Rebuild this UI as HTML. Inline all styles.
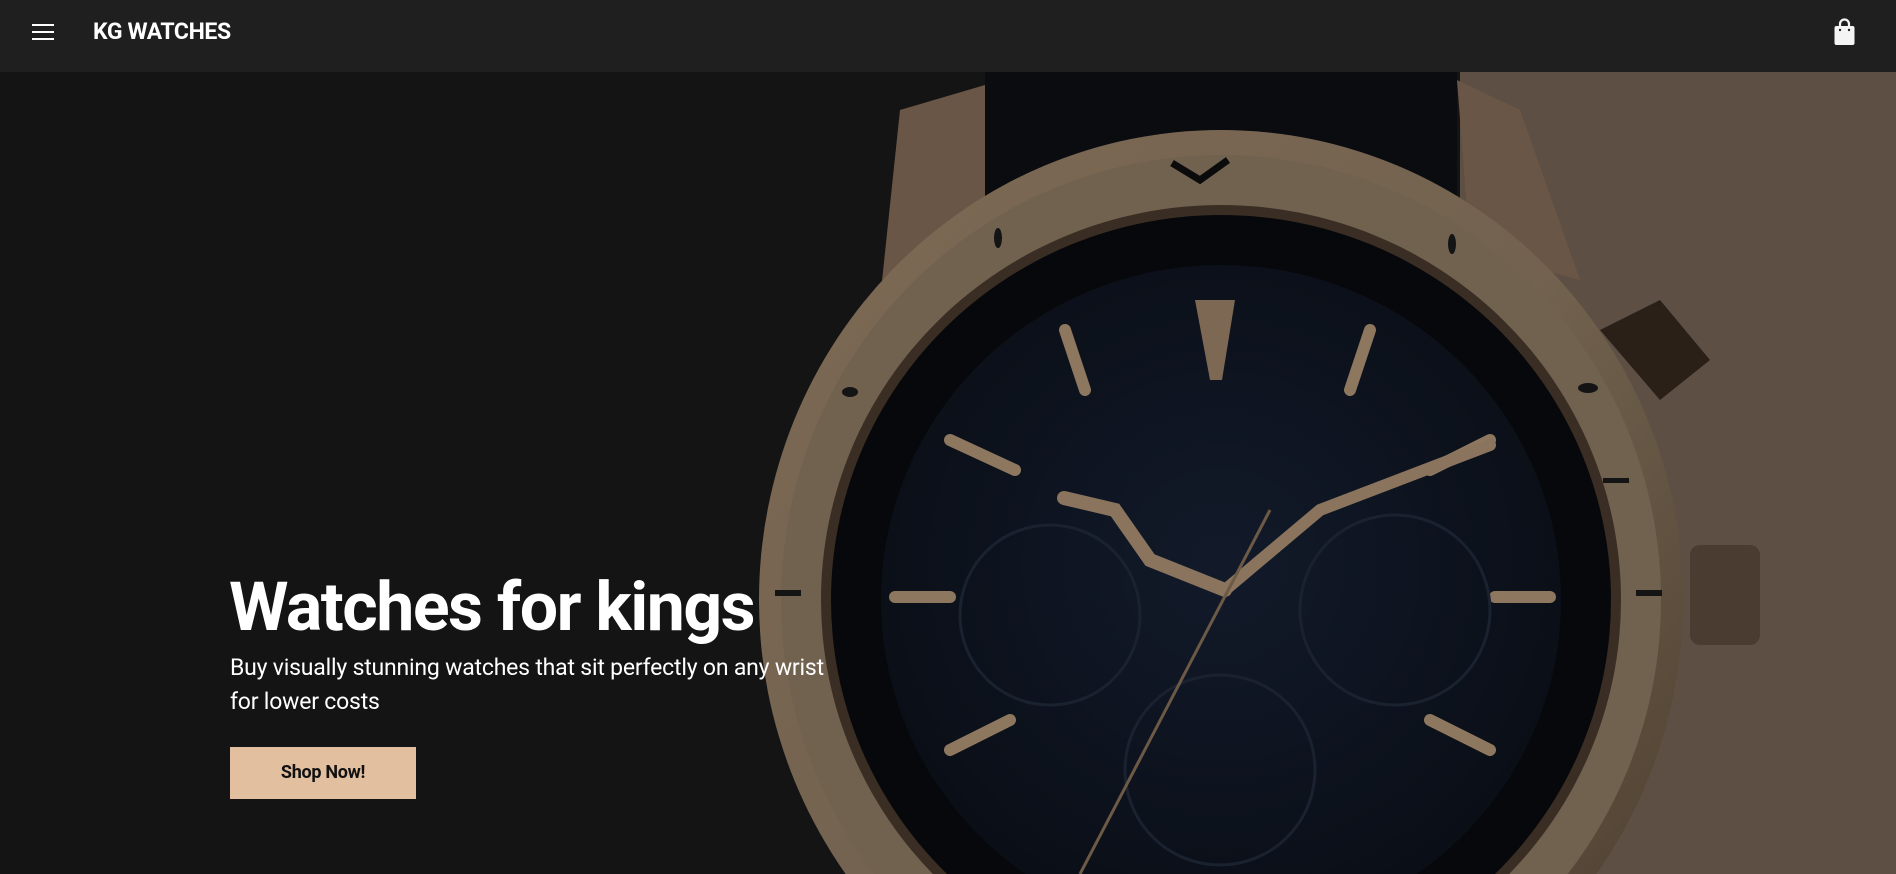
<!DOCTYPE html>
<html><head><meta charset="utf-8"><style>
*{margin:0;padding:0;box-sizing:border-box}
html,body{width:1896px;height:874px;overflow:hidden}
body{background:#141414;font-family:"Roboto","Liberation Sans",sans-serif;position:relative}
.hdr{position:absolute;left:0;top:0;width:1896px;height:72px;background:#1f1f1f;z-index:5}
.ham{position:absolute;left:32px;width:22px;height:2px;background:#fff}
.logo{position:absolute;left:93px;top:18px;color:#fff;font-weight:bold;font-size:23px;letter-spacing:-0.4px}
h1{position:absolute;left:229px;top:567px;color:#fff;font-size:68px;font-weight:bold;letter-spacing:-1.5px;white-space:nowrap;z-index:3}
p{position:absolute;left:230px;top:651px;color:#fff;font-size:23px;line-height:34px;width:605px;letter-spacing:-0.2px;z-index:3}
.btn{position:absolute;left:230px;top:747px;width:186px;height:52px;background:#e2bf9f;color:#111;font-weight:bold;font-size:18px;text-align:center;line-height:52px;letter-spacing:-0.3px;z-index:3}
svg.bg{position:absolute;left:0;top:72px;display:block}
</style></head><body>
<div class="hdr">
<div class="ham" style="top:24px"></div><div class="ham" style="top:31px"></div><div class="ham" style="top:38px"></div>
<div class="logo">KG WATCHES</div>
<svg style="position:absolute;left:1834px;top:18px" width="21" height="28" viewBox="0 0 21 28"><path d="M6 9V6a4.5 4.5 0 0 1 9 0v3" fill="none" stroke="#f4f4f4" stroke-width="2.2"/><rect x="0.5" y="8" width="20" height="19" rx="2" fill="#f4f4f4"/><circle cx="6" cy="12" r="1.2" fill="#1f1f1f"/><circle cx="15" cy="12" r="1.2" fill="#1f1f1f"/></svg>
</div>
<svg class="bg" width="1896" height="802" viewBox="0 72 1896 802">
<defs>
<radialGradient id="dial" cx="0.5" cy="0.45" r="0.55"><stop offset="0" stop-color="#121a2a"/><stop offset="1" stop-color="#0a0e16"/></radialGradient>
<linearGradient id="gold" x1="0" y1="0" x2="1" y2="1"><stop offset="0" stop-color="#7e6a55"/><stop offset="0.5" stop-color="#72624f"/><stop offset="1" stop-color="#4a3a2c"/></linearGradient>
</defs>
<rect x="1458" y="72" width="438" height="802" fill="#5d4f43"/>
<rect x="760" y="72" width="700" height="802" fill="#141414"/>
<rect x="985" y="72" width="472" height="140" fill="#0b0c10"/>
<path d="M900 110 L985 85 L985 230 L880 300 Z" fill="#6a5646"/>
<path d="M1457 80 L1520 110 L1580 280 L1470 250 Z" fill="#6a5646"/>
<rect x="1690" y="545" width="70" height="100" rx="10" fill="#4a3c30"/>
<path d="M1600 330 l60 -30 l50 60 l-50 40 Z" fill="#2a2018"/>
<ellipse cx="1221" cy="600" rx="462" ry="470" fill="url(#gold)"/>
<ellipse cx="1221" cy="600" rx="440" ry="445" fill="#716250"/>
<ellipse cx="1221" cy="600" rx="400" ry="395" fill="#3a2e24"/>
<ellipse cx="1221" cy="600" rx="390" ry="385" fill="#07080b"/>
<ellipse cx="1221" cy="600" rx="340" ry="335" fill="url(#dial)"/>
<path d="M1172 163 L1200 180 L1228 160" fill="none" stroke="#0b0b0b" stroke-width="7"/>
<g fill="#141414"><ellipse cx="998" cy="238" rx="4" ry="10"/><ellipse cx="1452" cy="244" rx="4" ry="10"/><ellipse cx="850" cy="392" rx="8" ry="5"/><ellipse cx="1588" cy="388" rx="10" ry="5"/><rect x="1603" y="478" width="26" height="5"/><rect x="1636" y="590" width="26" height="6"/><rect x="775" y="590" width="26" height="6"/></g>
<g stroke="#8d775e" stroke-width="12" stroke-linecap="round">
<line x1="1065" y1="330" x2="1085" y2="390"/><line x1="1370" y1="330" x2="1350" y2="390"/>
<line x1="950" y1="440" x2="1015" y2="470"/><line x1="1490" y1="440" x2="1430" y2="470"/>
<line x1="895" y1="597" x2="950" y2="597"/><line x1="1495" y1="597" x2="1550" y2="597"/>
<line x1="950" y1="750" x2="1010" y2="720"/><line x1="1490" y1="750" x2="1430" y2="720"/>
</g>
<path d="M1195 300 L1235 300 L1222 380 L1210 380 Z" fill="#7d6853"/>
<g fill="none" stroke="#1a2230" stroke-width="3"><circle cx="1050" cy="615" r="90"/><circle cx="1395" cy="610" r="95"/><circle cx="1220" cy="770" r="95"/></g>
<path d="M1064 498 L1115 510 L1150 560 L1225 590" fill="none" stroke="#8a745d" stroke-width="14" stroke-linecap="round"/>
<path d="M1225 590 L1320 510 L1490 445" fill="none" stroke="#8a745d" stroke-width="12" stroke-linecap="round"/>
<line x1="1270" y1="510" x2="1080" y2="874" stroke="#6d5a46" stroke-width="3"/>
</svg>
<h1>Watches for kings</h1>
<p>Buy visually stunning watches that sit perfectly on any wrist for lower costs</p>
<div class="btn">Shop Now!</div>
</body></html>
